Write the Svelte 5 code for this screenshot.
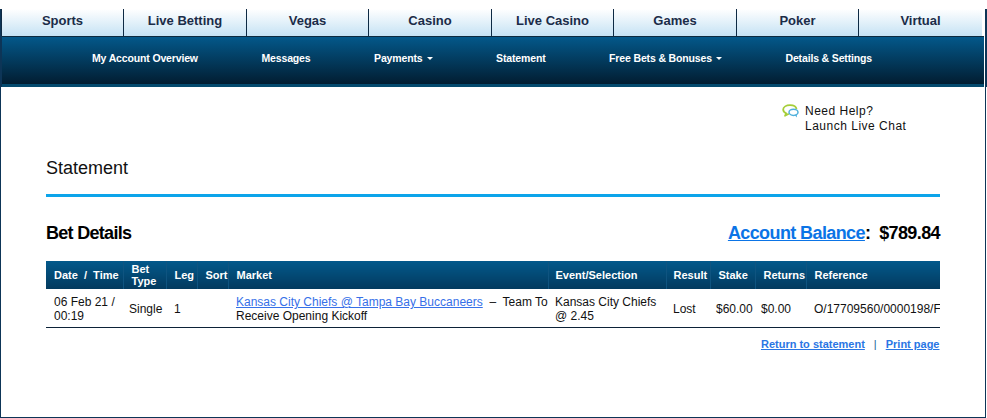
<script>
  const tabs = ['Sports','Live Betting','Vegas','Casino','Live Casino','Games','Poker','Virtual'];
  const nav = [['My Account Overview',false],['Messages',false],['Payments',true],['Statement',false],['Free Bets & Bonuses',true],['Details & Settings',false]];
</script>

<div class="page">
  <div class="frame">
    <ul class="tabs">
      {#each tabs as t}<li>{t}</li>{/each}
    </ul>
    <nav class="nav">
      {#each nav as [label, caret]}
        <span class="nav-item">{label}{#if caret}<i class="caret"></i>{/if}</span>
      {/each}
    </nav>
    <main class="content">
      <div class="help">
        <svg class="help-icon" width="17" height="15" viewBox="0 0 17 15" aria-hidden="true">
          <path d="M8 1.2C4.2 1.2 1.2 3 1.2 5.6c0 1.7 1.2 3 3 3.7L3 11.8l3.8-2" fill="#fff" stroke="#a6ce39" stroke-width="1.8" stroke-linejoin="round"/>
          <path d="M8 1.2c3.4 0 6.2 1.600 6.500 4" fill="none" stroke="#a6ce39" stroke-width="1.800"/>
          <ellipse cx="11.500" cy="8.300" rx="4.500" ry="3.100" fill="#fff" stroke="#4fb0dc" stroke-width="1.500"/>
          <path d="M12.500 11l2.500 2.500-.3-3.300" fill="#4fb0dc"/>
        </svg>
        <div class="help-text">Need Help?<br />Launch Live Chat</div>
      </div>
      <h1 class="title">Statement</h1>
      <div class="head-row">
        <h2>Bet Details</h2>
        <div class="balance"><a href="#b">Account Balance</a>:&nbsp; $789.84</div>
      </div>
      <table>
        <colgroup>
          <col class="c1" /><col class="c2" /><col class="c3" /><col class="c4" /><col class="c5" /><col class="c6" /><col class="c7" /><col class="c8" /><col class="c9" /><col />
        </colgroup>
        <thead>
          <tr>
            <th>Date &nbsp;/&nbsp; Time</th><th>Bet Type</th><th>Leg</th><th>Sort</th><th>Market</th><th class="h7">Event/Selection</th><th class="h7">Result</th><th>Stake</th><th>Returns</th><th>Reference</th>
          </tr>
        </thead>
        <tbody>
          <tr>
            <td>06 Feb 21 / 00:19</td><td class="p6">Single</td><td>1</td><td></td>
            <td><a href="#m">Kansas City Chiefs @ Tampa Bay Buccaneers</a> &nbsp;–&nbsp; Team To Receive Opening Kickoff</td>
            <td class="p7">Kansas City Chiefs @ 2.45</td><td class="p7">Lost</td><td class="p6">$60.00</td><td class="p6">$0.00</td><td>O/17709560/0000198/F</td>
          </tr>
        </tbody>
      </table>
      <div class="links"><a href="#r">Return to statement</a><span class="pipe">|</span><a href="#p">Print page</a></div>
    </main>
  </div>
</div>

<style>
  :global(body) { margin: 0; background: #fff; }
  .page { width: 987px; height: 418px; padding-top: 9px; box-sizing: border-box; font-family: "Liberation Sans", Arial, sans-serif; overflow: hidden; }
  .frame { position: relative; width: 986px; height: 409px; box-sizing: border-box; border: 1px solid #0d3557; border-top: 0; padding-left: 1px; }
  .frame::after { content: ""; position: absolute; top: 0; right: -2px; width: 1px; height: 78px; background: #0d3557; }
  .tabs { display: grid; grid-template-columns: 122px 123px 122px 123px 122px 123px 122px 124px; list-style: none; margin: 0 0 0 -1px; padding: 0; height: 27px; }
  .tabs li { text-align: center; font-size: 13px; font-weight: 700; line-height: 23px; color: #1b2c48; background: linear-gradient(#ffffff, #c5e2f4); border-left: 1px solid #0e2a44; box-sizing: border-box; }
  .nav { height: 51px; border-top: 1px solid #0c2a40; border-bottom: 3px solid #044a6e; box-sizing: border-box; background: linear-gradient(#03588a, #021d31); display: flex; padding-left: 90px; gap: 63.600px; width: 982px; box-shadow: -1px 0 0 #0d3557; }
  .nav-item { font-size: 10.500px; letter-spacing: -0.150px; font-weight: 700; color: #fff; line-height: 43px; white-space: nowrap; }
  .caret { display: inline-block; margin-left: 4px; vertical-align: 2px; border: 3.500px solid transparent; border-top-color: #fff; border-bottom: 0; }
  .content { padding: 0 44px 0 44px; }
  .help { display: flex; justify-content: flex-start; margin: 17px 0 0 736px; height: 30px; }
  .help-icon { margin-right: 6px; }
  .help-text { font-size: 12px; line-height: 15px; letter-spacing: 0.500px; color: #111; white-space: nowrap; }
  .title { font-size: 18px; font-weight: 400; color: #111; margin: 0; padding: 24px 0 15px; line-height: 21px; border-bottom: 3px solid #0ca4ea; width: 894px; }
  .head-row { display: flex; justify-content: space-between; align-items: baseline; margin-top: 24px; width: 894px; height: 40px; }
  h2 { font-size: 18px; font-weight: 700; margin: 0; color: #000; letter-spacing: -0.700px; line-height: 24px; }
  .balance { font-size: 18px; font-weight: 700; color: #000; letter-spacing: -0.600px; }
  .balance a { color: #0b74e6; }
  table { border-collapse: collapse; table-layout: fixed; width: 894px; }
  .c1 { width: 77px; } .c2 { width: 43px; } .c3 { width: 31px; } .c4 { width: 31px; } .c5 { width: 320px; } .c6 { width: 118px; } .c7 { width: 44px; } .c8 { width: 45px; } .c9 { width: 51px; }
  th { height: 28px; padding: 0 0 0 8px; font-size: 11px; font-weight: 700; line-height: 12px; color: #fff; text-align: left; background: linear-gradient(#03598b, #033a5e); border-right: 1px solid #0f5480; white-space: normal; box-sizing: border-box; overflow: hidden; }
  th:last-child { border-right: 0; }
  th.h7 { padding-left: 7px; }
  td { font-size: 12px; line-height: 14px; color: #111; padding: 6px 0 4px 8px; height: 38px; box-sizing: border-box; border-bottom: 1px solid #0c2238; vertical-align: middle; white-space: normal; overflow: hidden; }
  td.p6 { padding-left: 6px; }
  td.p7 { padding-left: 7px; }
  td a { color: #3670e8; }
  .links { text-align: right; width: 893.500px; font-size: 11px; font-weight: 700; line-height: 13px; margin-top: 10px; color: #1e5f95; }
  .links a { color: #2a76e4; }
  .pipe { margin: 0 9px; font-weight: 400; }
</style>
